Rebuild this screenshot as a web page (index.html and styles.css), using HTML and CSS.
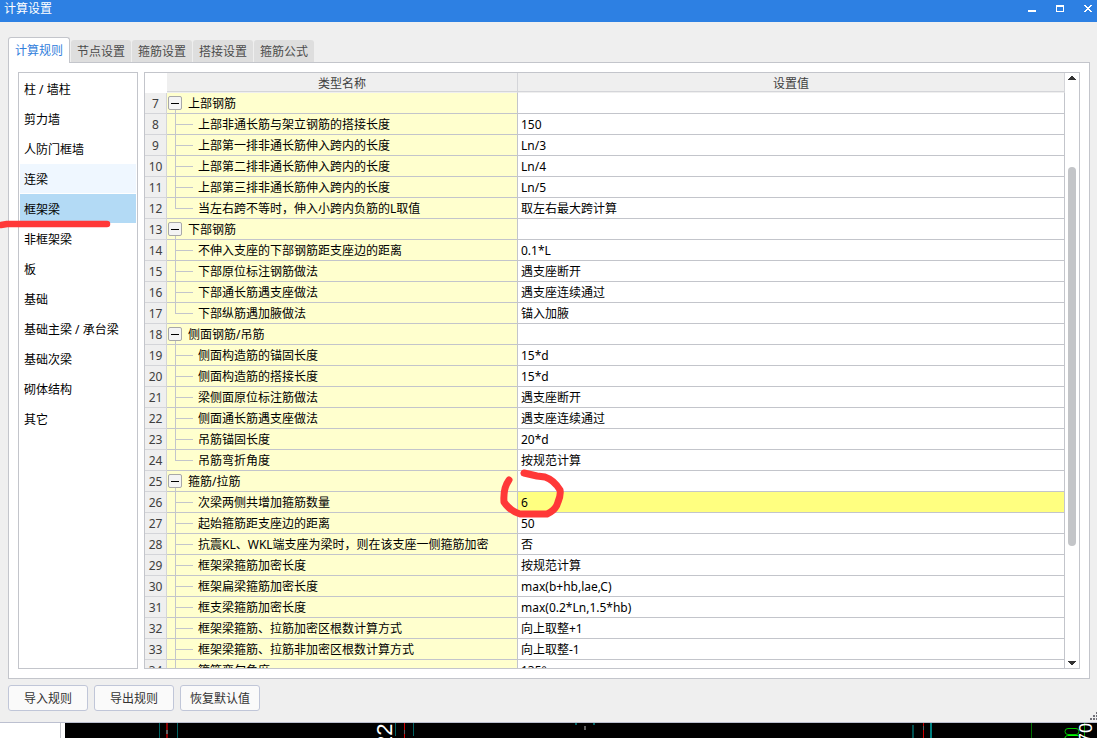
FILE: index.html
```
<!DOCTYPE html>
<html lang="zh-CN">
<head>
<meta charset="utf-8">
<title>计算设置</title>
<link rel="stylesheet" href="styles.css">
</head>
<body>
<main class="dialog">
  <header class="titlebar">
    <h1 class="title">计算设置</h1>
    <div class="window-controls">
      <button class="window-button" type="button" aria-label="最小化"><svg width="8" height="7" viewBox="0 0 8 7" shape-rendering="crispEdges"><path d="M0 5h8v2H0z" fill="#fff"/></svg></button>
      <button class="window-button" type="button" aria-label="最大化"><svg width="8" height="7" viewBox="0 0 8 7" shape-rendering="crispEdges"><path fill-rule="evenodd" d="M0 0h8v7H0zM1 2v4h6V2z" fill="#fff"/></svg></button>
      <button class="window-button" type="button" aria-label="关闭"><svg width="8" height="7" viewBox="0 0 8 7" shape-rendering="crispEdges"><path d="M0 0h2v1h1v1h2V1h1V0h2v1H7v1H6v1H5v1h1v1h1v1h1v1H6V6H5V5H3v1H2v1H0V6h1V5h1V4h1V3H2V2H1V1H0z" fill="#fff"/></svg></button>
    </div>
  </header>
  <div class="content">
    <div class="tabs" role="tablist">
      <button class="tab tab-active" type="button" role="tab" aria-selected="true">计算规则</button>
      <button class="tab" type="button" role="tab">节点设置</button>
      <button class="tab" type="button" role="tab">箍筋设置</button>
      <button class="tab" type="button" role="tab">搭接设置</button>
      <button class="tab" type="button" role="tab">箍筋公式</button>
    </div>
    <section class="panel">
      <nav class="categories">
        <button class="category" type="button">柱 / 墙柱</button>
        <button class="category" type="button">剪力墙</button>
        <button class="category" type="button">人防门框墙</button>
        <button class="category category-hover" type="button">连梁</button>
        <button class="category category-selected" type="button">框架梁</button>
        <button class="category" type="button">非框架梁</button>
        <button class="category" type="button">板</button>
        <button class="category" type="button">基础</button>
        <button class="category" type="button">基础主梁 / 承台梁</button>
        <button class="category" type="button">基础次梁</button>
        <button class="category" type="button">砌体结构</button>
        <button class="category" type="button">其它</button>
      </nav>
      <div class="grid">
        <div class="viewport">
          <table class="rules">
            <colgroup><col class="col-number"><col class="col-name"><col></colgroup>
            <thead>
              <tr><th class="corner"></th><th>类型名称</th><th>设置值</th></tr>
            </thead>
            <tbody>
              <tr><th>7</th><td class="group"><button class="toggle" type="button" aria-label="折叠"></button>上部钢筋</td><td></td></tr>
              <tr><th>8</th><td class="item">上部非通长筋与架立钢筋的搭接长度</td><td>150</td></tr>
              <tr><th>9</th><td class="item">上部第一排非通长筋伸入跨内的长度</td><td>Ln/3</td></tr>
              <tr><th>10</th><td class="item">上部第二排非通长筋伸入跨内的长度</td><td>Ln/4</td></tr>
              <tr><th>11</th><td class="item">上部第三排非通长筋伸入跨内的长度</td><td>Ln/5</td></tr>
              <tr><th>12</th><td class="item item-last">当左右跨不等时，伸入小跨内负筋的L取值</td><td>取左右最大跨计算</td></tr>
              <tr><th>13</th><td class="group"><button class="toggle" type="button" aria-label="折叠"></button>下部钢筋</td><td></td></tr>
              <tr><th>14</th><td class="item">不伸入支座的下部钢筋距支座边的距离</td><td>0.1*L</td></tr>
              <tr><th>15</th><td class="item">下部原位标注钢筋做法</td><td>遇支座断开</td></tr>
              <tr><th>16</th><td class="item">下部通长筋遇支座做法</td><td>遇支座连续通过</td></tr>
              <tr><th>17</th><td class="item item-last">下部纵筋遇加腋做法</td><td>锚入加腋</td></tr>
              <tr><th>18</th><td class="group"><button class="toggle" type="button" aria-label="折叠"></button>侧面钢筋/吊筋</td><td></td></tr>
              <tr><th>19</th><td class="item">侧面构造筋的锚固长度</td><td>15*d</td></tr>
              <tr><th>20</th><td class="item">侧面构造筋的搭接长度</td><td>15*d</td></tr>
              <tr><th>21</th><td class="item">梁侧面原位标注筋做法</td><td>遇支座断开</td></tr>
              <tr><th>22</th><td class="item">侧面通长筋遇支座做法</td><td>遇支座连续通过</td></tr>
              <tr><th>23</th><td class="item">吊筋锚固长度</td><td>20*d</td></tr>
              <tr><th>24</th><td class="item item-last">吊筋弯折角度</td><td>按规范计算</td></tr>
              <tr><th>25</th><td class="group"><button class="toggle" type="button" aria-label="折叠"></button>箍筋/拉筋</td><td></td></tr>
              <tr><th>26</th><td class="item">次梁两侧共增加箍筋数量</td><td class="current">6</td></tr>
              <tr><th>27</th><td class="item">起始箍筋距支座边的距离</td><td>50</td></tr>
              <tr><th>28</th><td class="item">抗震KL、WKL端支座为梁时，则在该支座一侧箍筋加密</td><td>否</td></tr>
              <tr><th>29</th><td class="item">框架梁箍筋加密长度</td><td>按规范计算</td></tr>
              <tr><th>30</th><td class="item">框架扁梁箍筋加密长度</td><td>max(b+hb,lae,C)</td></tr>
              <tr><th>31</th><td class="item">框支梁箍筋加密长度</td><td>max(0.2*Ln,1.5*hb)</td></tr>
              <tr><th>32</th><td class="item">框架梁箍筋、拉筋加密区根数计算方式</td><td>向上取整+1</td></tr>
              <tr><th>33</th><td class="item">框架梁箍筋、拉筋非加密区根数计算方式</td><td>向上取整-1</td></tr>
              <tr><th>34</th><td class="item">箍筋弯勾角度</td><td>135°</td></tr>
            </tbody>
          </table>
        </div>
        <div class="scrollbar">
          <button class="scroll-button" type="button" aria-label="向上滚动"><svg width="8" height="4" viewBox="0 0 8 4" shape-rendering="crispEdges"><path d="M3 0h2v1h1v1h1v1h1v1H0V3h1V2h1V1h1z" fill="#333"/></svg></button>
          <div class="track"><div class="thumb"></div></div>
          <button class="scroll-button" type="button" aria-label="向下滚动"><svg width="8" height="4" viewBox="0 0 8 4" shape-rendering="crispEdges"><path d="M0 0h8v1H7v1H6v1H5v1H3V3H2V2H1V1H0z" fill="#333"/></svg></button>
        </div>
      </div>
    </section>
    <footer class="actions">
      <button class="action" type="button">导入规则</button>
      <button class="action" type="button">导出规则</button>
      <button class="action" type="button">恢复默认值</button>
    </footer>
  </div>
  <svg class="grip" width="7" height="8" viewBox="0 0 7 8" shape-rendering="crispEdges"><path d="M6 0h1v2H6zM3 3h2v2H3zM6 3h1v2H6zM0 6h2v2H0zM3 6h2v2H3zM6 6h1v2H6z" fill="#707078"/></svg>
</main>
<div class="backdrop">
  <div class="side-pane"></div>
  <svg class="drawing" width="1032" height="15" viewBox="65 723 1032 15">
    <g shape-rendering="crispEdges">
      <path d="M159 723h1v15h-1zM177 723h1v15h-1zM395 723h1v13h-1zM413 723h1v13h-1zM575 723h2v2h-2zM593 723h2v2h-2z" fill="#006464"/>
      <path d="M166 723h2v15h-2z" fill="#8b0000"/>
      <path d="M404 723h1v15h-1zM923 723h1v15h-1z" fill="#d00000"/>
      <path d="M166 730h2v4h-2zM404 730h1v4h-1zM584 726h2v4h-2zM923 726h1v4h-1z" fill="#606060"/>
      <path d="M912 725h2v13h-2z" fill="#005050"/><path d="M930 723h2v15h-2z" fill="#008080"/>
      <path d="M1031 723h1v15h-1z" fill="#007000"/><path d="M1084 723h1v15h-1z" fill="#00a000"/>
    </g>
    <text class="cad-text" transform="translate(392 748) rotate(-90)" fill="#fff">22</text>
    <g fill="none" stroke-width="1">
      <rect x="1065" y="728.5" width="14" height="6" rx="3" stroke="#00c800"/>
      <path d="M1065 738c0-2 2-2.500 4-2.500h8c2 0 3 1 3 2.500" stroke="#00ff00"/>
    </g>
    <text class="cad-text cad-text-small" transform="translate(1092 743) rotate(-90)" fill="#fff">70</text>
  </svg>
</div>
<svg class="markup" width="564" height="520" viewBox="0 0 564 520" fill="none" stroke="#ff3838" stroke-linecap="round" stroke-linejoin="round" aria-hidden="true">
  <path d="M1 225L7 224H107" stroke-width="6.500"/>
  <path d="M509 480Q503 488 504 502Q510 511 520 514H547Q556 510 558 502Q561 495 560 490Q554 480 545 477L537 476L524 473" stroke-width="7"/>
</svg>
</body>
</html>
```

FILE: styles.css
```
* {
  box-sizing: border-box;
}

body {
  display: flex;
  flex-direction: column;
  height: 100vh;
  margin: 0;
  overflow: hidden;
  background: #efefef;
  color: #000;
  font: 12px/18px "Noto Sans", "Noto Sans CJK SC", sans-serif;
}

button {
  margin: 0;
  padding: 0;
  border: 0;
  background: none;
  color: inherit;
  font: inherit;
}

.dialog {
  position: relative;
  display: flex;
  flex: 1;
  flex-direction: column;
  min-height: 0;
  border-bottom: 1px solid #bcc0d0;
}

.titlebar {
  display: flex;
  justify-content: space-between;
  height: 22px;
  padding-left: 4px;
  background: #2d80e3;
  color: #fff;
}

.title {
  margin: 0;
  font-size: 12px;
  font-weight: 400;
  line-height: 18px;
}

.window-controls {
  display: flex;
  gap: 10px;
}

.window-button {
  display: flex;
  justify-content: center;
  width: 18px;
  padding-top: 5px;
}

.content {
  display: flex;
  flex: 1;
  flex-direction: column;
  min-height: 0;
  padding: 15px 7px 11px 8px;
}

.tabs {
  display: flex;
  align-items: flex-end;
  gap: 1px;
}

.tab {
  height: 22px;
  padding: 2px 6px 0;
  border-radius: 3px 3px 0 0;
  background: #dedede;
  color: #4c4c4c;
}

.tab-active {
  z-index: 1;
  height: 26px;
  margin-bottom: -1px;
  padding: 0 6px;
  border: 1px solid #c3c5cb;
  border-bottom: 0;
  background: #fff;
  color: #3280dc;
}

.panel {
  display: flex;
  flex: 1;
  gap: 6px;
  min-height: 0;
  padding: 9px;
  border: 1px solid #c3c5cb;
  background: #fff;
}

.categories {
  display: flex;
  flex: none;
  flex-direction: column;
  gap: 1px;
  width: 120px;
  padding: 1px;
  border: 1px solid #c3c5cb;
}

.category {
  height: 29px;
  padding: 2px 0 0 4px;
  text-align: left;
}

.category-hover {
  background: #eff7ff;
}

.category-selected {
  background: #b3daf5;
}

.grid {
  display: flex;
  flex: 1;
  min-width: 0;
  border: 1px solid #c3c5cb;
}

.viewport {
  flex: 1;
  min-width: 0;
  overflow: hidden;
}

.rules {
  width: 100%;
  border-spacing: 0;
  table-layout: fixed;
}

.col-number {
  width: 22px;
}

.col-name {
  width: 351px;
}

.rules th {
  padding: 2px 0 0;
  background: #efefef;
  color: #404040;
  font-weight: 400;
}

.rules td {
  height: 21px;
  padding: 2px 3px 0;
  border-right: 1px solid #c3c5cb;
  border-bottom: 1px solid #c3c5cb;
  white-space: nowrap;
}

.rules thead th {
  height: 20px;
  border-right: 1px solid #d4d5d9;
  box-shadow: inset 0 -1px #efefef, inset 0 -2px #d4d5d9;
}

.rules thead .corner {
  border: 0;
  background: #fff;
  box-shadow: none;
}

.rules tbody th {
  border-right: 1px solid #d4d5d9;
  border-bottom: 1px solid #d4d5d9;
}

.rules .group {
  padding-left: 1px;
  background: linear-gradient(#c3c5cb, #c3c5cb) 8px 16px / 1px 5px no-repeat #ffffce;
}

.rules .item {
  padding-left: 31px;
  background:
    linear-gradient(#c3c5cb, #c3c5cb) 8px 0 / 1px 21px no-repeat,
    linear-gradient(#c3c5cb, #c3c5cb) 8px 10px / 18px 1px no-repeat #ffffce;
}

.rules .item-last {
  background-size: 1px 10px, 18px 1px;
}

.rules .current {
  background: #ffff80;
}

.toggle {
  width: 14px;
  height: 14px;
  margin: 1px 6px 0 0;
  border: 1px solid #a8a8a8;
  border-radius: 2px;
  background: linear-gradient(#000, #000) center / 8px 1px no-repeat #f4f4f4;
  vertical-align: top;
}

.scrollbar {
  display: flex;
  flex: none;
  flex-direction: column;
  width: 14px;
}

.scroll-button {
  display: flex;
  align-items: center;
  justify-content: center;
  height: 10px;
}

.track {
  display: flex;
  flex: 1;
  flex-direction: column;
  align-items: center;
}

.track::before {
  flex: 84;
  content: "";
}

.track::after {
  flex: 112;
  content: "";
}

.thumb {
  flex: 379;
  width: 8px;
  border-radius: 4px;
  background: #c3c5c8;
}

.actions {
  display: flex;
  gap: 6px;
  padding-top: 6px;
}

.action {
  width: 80px;
  height: 26px;
  padding-top: 2px;
  border: 1px solid #c0c6d8;
  border-radius: 3px;
  background: #fafafa;
  color: #333;
}

.grip {
  position: absolute;
  right: 0;
  bottom: 2px;
}

.backdrop {
  display: flex;
  flex: none;
  height: 15px;
  background: #000;
}

.side-pane {
  flex: none;
  width: 65px;
  background: linear-gradient(#c3c5cb, #c3c5cb) 60px 0 / 1px 100% no-repeat #fff;
}

.drawing {
  flex: none;
}

.cad-text {
  font: 22px "Liberation Sans", sans-serif;
}

.cad-text-small {
  font-size: 18px;
}

.markup {
  position: absolute;
  top: 0;
  left: 0;
  pointer-events: none;
}
```
